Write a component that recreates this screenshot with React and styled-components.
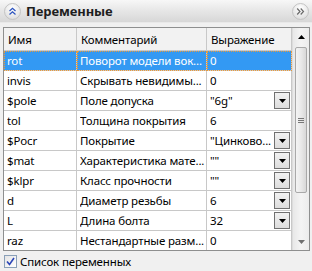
import React from "react";
import styled, { createGlobalStyle } from "styled-components";

const Global = createGlobalStyle`
  html, body { margin: 0; padding: 0; background: #f0f0f0; }
  body { font-family: "Noto Sans", "Segoe UI", sans-serif; font-size: 11.5px; color: #000; }
`;

const Panel = styled.div`
  width: 312px;
  height: 271px;
  background: #f0f0f0;
  display: flex;
  flex-direction: column;
  overflow: hidden;
`;

const TitleBar = styled.div`
  height: 22px;
  display: flex;
  align-items: center;
  padding: 0 3px 0 4px;
  background: linear-gradient(#f7f7f7, #e6e6e6 50%, #d7d7d7);
  border-bottom: 1px solid #e9e9e9;
`;

const Title = styled.div`
  flex: 1;
  margin-left: 5px;
  font-weight: 700;
  font-size: 13px;
  color: #1e1e1e;
  letter-spacing: -0.1px;
`;

const RoundBtn = styled.div`
  width: 15px;
  height: 15px;
  border-radius: 50%;
  border: 1px solid #c4c4c4;
  background: radial-gradient(circle at 50% 30%, #ffffff, #e4e4e4 70%, #d0d0d0);
  display: flex;
  align-items: center;
  justify-content: center;
`;

const Frame = styled.div`
  margin: 4px 2px 0 3px;
  height: 222px;
  border: 1px solid #8e8f8f;
  display: flex;
  background: #fff;
`;

const TableArea = styled.div`
  flex: 1;
  display: flex;
  flex-direction: column;
  overflow: hidden;
`;

const Row = styled.div`
  display: grid;
  grid-template-columns: 73px 130px 1fr;
  height: ${(p) => (p.$header ? 23 : 20)}px;
  flex: none;
`;

const Cell = styled.div`
  display: flex;
  align-items: center;
  gap: 2px;
  padding: 0 1px 0 ${(p) => (p.$header ? 4 : 3)}px;
  border-right: 1px solid #c8c8c8;
  border-bottom: 1px solid #c8c8c8;
  background: ${(p) => (p.$header ? "#f2f2f2" : p.$sel ? "#3399f3" : "#fff")};
  color: ${(p) => (p.$sel ? "#fff" : "#000")};
  white-space: nowrap;
  overflow: hidden;
  box-sizing: border-box;
  outline: ${(p) => (p.$sel ? "1px dotted #e89a3c" : "none")};
  outline-offset: -1px;
  letter-spacing: -0.15px;
`;

const CellText = styled.span`
  flex: 1;
  min-width: 0;
  overflow: hidden;
  white-space: nowrap;
`;

const DropBtn = styled.div`
  width: 14px;
  height: 15px;
  flex: none;
  border: 1px solid #707070;
  background: linear-gradient(#f2f2f2, #dcdcdc);
  display: flex;
  align-items: center;
  justify-content: center;
`;

const ScrollBar = styled.div`
  width: 16px;
  flex: none;
  border-left: 1px solid #dcdcdc;
  background: linear-gradient(90deg, #e8e8e8, #f4f4f4 50%, #ececec);
  display: flex;
  flex-direction: column;
  align-items: center;
`;

const ArrowBox = styled.div`
  height: 17px;
  width: 100%;
  display: flex;
  align-items: center;
  justify-content: center;
  flex: none;
`;

const Thumb = styled.div`
  width: 12px;
  height: 146px;
  margin-top: 2px;
  border: 1px solid #a9a9a9;
  border-radius: 2px;
  box-sizing: border-box;
  background: linear-gradient(90deg, #f4f4f4, #e9e9e9 50%, #d8d8d8);
  display: flex;
  align-items: center;
  justify-content: center;
`;

const Track = styled.div`
  flex: 1;
`;

const Footer = styled.div`
  height: 20px;
  display: flex;
  align-items: center;
  padding-left: 4px;
  gap: 3px;
`;

const Check = styled.div`
  width: 11px;
  height: 11px;
  border: 1px solid #8aa0b8;
  background: linear-gradient(135deg, #e4e4e4, #ffffff);
  display: flex;
  align-items: center;
  justify-content: center;
`;

const Label = styled.span`
  font-size: 11.5px;
  letter-spacing: -0.15px;
`;

const TriangleDown = ({ color = "#000" }) => (
  <svg width="7" height="4" viewBox="0 0 7 4">
    <polygon points="0,0 7,0 3.5,4" fill={color} />
  </svg>
);

const rows = [
  ["rot", "Поворот модели вок...", "0", false, true],
  ["invis", "Скрывать невидимы...", "0", false],
  ["$pole", "Поле допуска", "\"6g\"", true],
  ["tol", "Толщина покрытия", "6", false],
  ["$Pocr", "Покрытие", "\"Цинково...", true],
  ["$mat", "Характеристика мате...", "\"\"", true],
  ["$klpr", "Класс прочности", "\"\"", true],
  ["d", "Диаметр резьбы", "6", true],
  ["L", "Длина болта", "32", true],
  ["raz", "Нестандартные разм...", "0", false],
];

export default function App() {
  return (
    <>
      <Global />
      <Panel>
        <TitleBar>
          <RoundBtn>
            <svg width="9" height="9" viewBox="0 0 9 9">
              <polyline points="1.5,4 4.5,1.2 7.5,4" fill="none" stroke="#2a52be" strokeWidth="1.2" />
              <polyline points="1.5,7.5 4.5,4.7 7.5,7.5" fill="none" stroke="#2a52be" strokeWidth="1.2" />
            </svg>
          </RoundBtn>
          <Title>Переменные</Title>
          <RoundBtn>
            <svg width="9" height="9" viewBox="0 0 9 9">
              <polyline points="1.2,1.5 4,4.5 1.2,7.5" fill="none" stroke="#6a6a6a" strokeWidth="1.2" />
              <polyline points="4.7,1.5 7.5,4.5 4.7,7.5" fill="none" stroke="#6a6a6a" strokeWidth="1.2" />
            </svg>
          </RoundBtn>
        </TitleBar>
        <Frame>
          <TableArea>
            <Row $header>
              <Cell $header>Имя</Cell>
              <Cell $header>Комментарий</Cell>
              <Cell $header>Выражение</Cell>
            </Row>
            {rows.map(([n, c, v, dd, sel]) => (
              <Row key={n}>
                <Cell $sel={sel}><CellText>{n}</CellText></Cell>
                <Cell $sel={sel}><CellText>{c}</CellText></Cell>
                <Cell $sel={sel}>
                  <CellText>{v}</CellText>
                  {dd && (
                    <DropBtn>
                      <TriangleDown />
                    </DropBtn>
                  )}
                </Cell>
              </Row>
            ))}
          </TableArea>
          <ScrollBar>
            <ArrowBox>
              <svg width="7" height="4" viewBox="0 0 7 4">
                <polygon points="0,4 7,4 3.5,0" fill="#000" />
              </svg>
            </ArrowBox>
            <Thumb>
              <svg width="6" height="5" viewBox="0 0 6 5">
                <line x1="0" y1="0.5" x2="6" y2="0.5" stroke="#777" />
                <line x1="0" y1="2.5" x2="6" y2="2.5" stroke="#777" />
                <line x1="0" y1="4.5" x2="6" y2="4.5" stroke="#777" />
              </svg>
            </Thumb>
            <Track />
            <ArrowBox>
              <TriangleDown color="#707070" />
            </ArrowBox>
          </ScrollBar>
        </Frame>
        <Footer>
          <Check>
            <svg width="9" height="9" viewBox="0 0 9 9">
              <polyline points="1,4.5 3.5,7.5 8,1" fill="none" stroke="#2c46b8" strokeWidth="1.6" />
            </svg>
          </Check>
          <Label>Список переменных</Label>
        </Footer>
      </Panel>
    </>
  );
}
